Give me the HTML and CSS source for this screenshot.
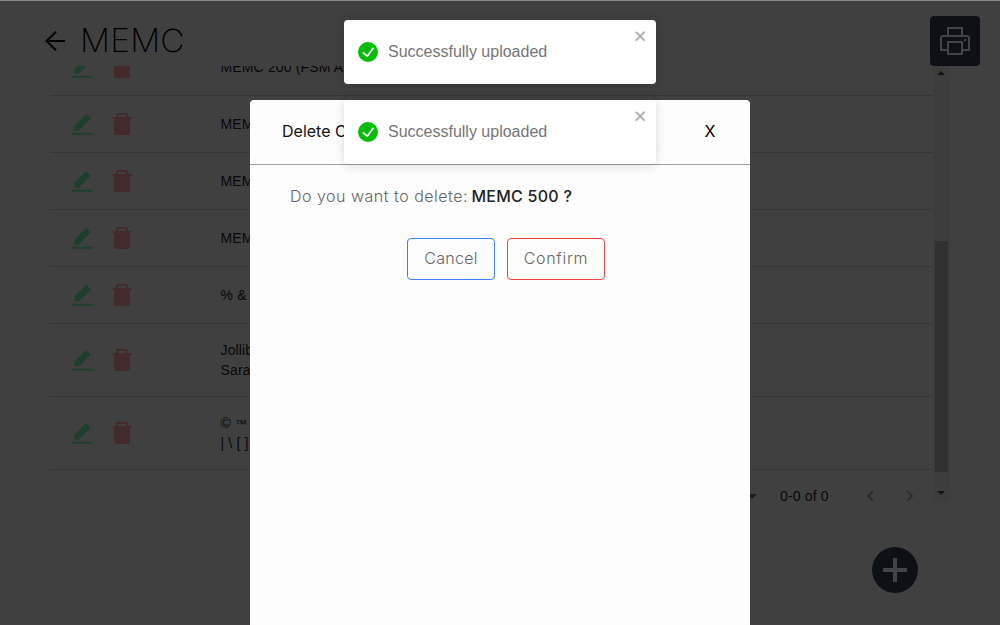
FILE: index.html
```html
<!DOCTYPE html>
<html lang="en">
<head>
<meta charset="utf-8">
<title>MEMC</title>
<link rel="stylesheet" href="styles.css">
</head>
<body>
<svg class="symbols" aria-hidden="true">
  <symbol id="edit" viewBox="0 0 22 22"><path d="M3.2 17.5V13L15 1l4.7 4.6L8 17.5z"/><path d="M1 19.8h20q1 0 1 1t-1 1H1q-1 0-1-1t1-1z"/></symbol>
  <symbol id="trash" viewBox="0 0 20 22"><path fill-rule="evenodd" d="M4 4V2Q4 0 6 0h8q2 0 2 2v2h3q1 0 1 1t-1 1h-1v14q0 2-2 2H4q-2 0-2-2V6H1Q0 6 0 5t1-1zM6 4h8V2H6z"/></symbol>
  <symbol id="check" viewBox="0 0 24 24"><path d="M12 0a12 12 0 1012 12A12.014 12.014 0 0012 0zm6.927 8.2l-6.845 9.289a1.011 1.011 0 01-1.43.188l-4.888-3.908a1 1 0 111.25-1.562l4.076 3.261 6.227-8.451a1 1 0 111.61 1.183z"/></symbol>
  <symbol id="close" viewBox="0 0 14 16"><path fill-rule="evenodd" d="M7.71 8.23l3.75 3.75-1.48 1.48-3.75-3.75-3.75 3.75L1 11.98l3.75-3.75L1 4.48 2.48 3l3.75 3.75L9.98 3l1.48 1.48-3.75 3.75z"/></symbol>
</svg>
<div class="page">
  <header class="topbar">
    <svg class="back" viewBox="0 0 20 20"><path d="M11 .7L1.5 10l9.5 9.3M1.5 10H20"/></svg>
    <h1 class="title">MEMC</h1>
    <button class="print" aria-label="Print"><svg viewBox="0 0 30 28"><path d="M8 9V1h14v8M8 23H1V11q0-2 2-2h24q2 0 2 2v12h-7M8 15h14v12H8z"/><circle cx="25" cy="13" r="1.2"/></svg></button>
  </header>
  <main class="scroller">
    <div class="table">
      <div class="row"><span class="actions"><svg class="edit"><use href="#edit"/></svg><svg class="trash"><use href="#trash"/></svg></span><span>MEMC 200 (FSM A</span></div>
      <div class="row"><span class="actions"><svg class="edit"><use href="#edit"/></svg><svg class="trash"><use href="#trash"/></svg></span><span>MEMC</span></div>
      <div class="row"><span class="actions"><svg class="edit"><use href="#edit"/></svg><svg class="trash"><use href="#trash"/></svg></span><span>MEMC</span></div>
      <div class="row"><span class="actions"><svg class="edit"><use href="#edit"/></svg><svg class="trash"><use href="#trash"/></svg></span><span>MEMC</span></div>
      <div class="row"><span class="actions"><svg class="edit"><use href="#edit"/></svg><svg class="trash"><use href="#trash"/></svg></span><span>% &amp;</span></div>
      <div class="row tall"><span class="actions"><svg class="edit"><use href="#edit"/></svg><svg class="trash"><use href="#trash"/></svg></span><span>Jollib<br>Sara</span></div>
      <div class="row tall"><span class="actions"><svg class="edit"><use href="#edit"/></svg><svg class="trash"><use href="#trash"/></svg></span><span>© <span class="mark">™</span><br>| \ [ ]</span></div>
      <div class="pager"><i class="caret"></i><span class="range">0-0 of 0</span><svg class="chev" viewBox="0 0 8 12"><path d="M7 1L2 6l5 5"/></svg><svg class="chev" viewBox="0 0 8 12"><path d="M1 1l5 5-5 5"/></svg></div>
    </div>
    <div class="scrollbar"><i class="up"></i><i class="thumb"></i><i class="down"></i></div>
  </main>
  <button class="add" aria-label="Add"><svg viewBox="0 0 24 24"><path d="M12 0v24M0 12h24"/></svg></button>
</div>
<section class="dialog">
  <header class="dialog-head"><h2>Delete C</h2><button class="dismiss">X</button></header>
  <div class="dialog-body">
    <p class="question"><span class="ask">Do you want to delete:</span><b>MEMC 500 ?</b></p>
    <div class="buttons"><button class="btn cancel">Cancel</button><button class="btn confirm">Confirm</button></div>
  </div>
</section>
<div class="toasts">
  <div class="toast"><svg class="ok"><use href="#check"/></svg><span>Successfully uploaded</span><svg class="x"><use href="#close"/></svg></div>
  <div class="toast"><svg class="ok"><use href="#check"/></svg><span>Successfully uploaded</span><svg class="x"><use href="#close"/></svg></div>
</div>
</body>
</html>
```
FILE: styles.css
```css
* { box-sizing: border-box; }
body { margin: 0; height: 625px; overflow: hidden; background: #404040; font-family: "Liberation Sans", Arial, sans-serif; }
button { padding: 0; border: 0; background: none; font: inherit; }
svg { display: block; flex: none; }
.symbols { position: absolute; width: 0; height: 0; }
.page { height: 625px; border-top: 1px solid #858a88; border-bottom: 2px solid #443f40; }
.topbar { height: 65px; padding: 15px 20px 0 45px; display: flex; align-items: flex-start; }
.back { width: 20px; height: 20px; margin-top: 15px; fill: none; stroke: #000; stroke-width: 2; }
.title { margin: 4px 0 0 15px; font: 200 32px/42px Inter, sans-serif; color: #000; letter-spacing: 0.2px; white-space: nowrap; transform: scaleX(1.045); transform-origin: left; }
.print { width: 50px; height: 50px; margin-left: auto; border-radius: 4px; background: #0d1117; display: grid; place-items: center; }
.print svg { width: 30px; height: 28px; fill: none; stroke: #404347; stroke-width: 2; }
.print circle { fill: #404347; stroke: none; }
.scroller { height: 435px; margin-left: 50px; width: 900px; display: flex; overflow: hidden; }
.table { width: 882px; margin-top: -27px; flex: none; }
.row { height: 57px; border-bottom: 1px solid #353535; display: flex; align-items: center; font-size: 14px; line-height: 20px; letter-spacing: 0.15px; color: #080808; white-space: nowrap; }
.tall { height: 73px; }
.mark { font-size: 12px; line-height: 1; }
.actions { width: 170.5px; padding-left: 21px; display: flex; gap: 19px; align-items: center; }
.edit { width: 22px; height: 22px; fill: #1f3f2d; }
.trash { width: 20px; height: 22px; fill: #442b2b; }
.pager { height: 52px; display: flex; align-items: center; padding-left: 697px; }
.caret, .up, .down { display: block; width: 0; height: 0; border: 4px solid transparent; }
.caret { border-width: 5px; border-top-color: #1c1c1c; border-bottom: 0; }
.range { width: 86px; flex: none; margin-left: 23px; font-size: 14px; letter-spacing: 0.15px; color: #080808; white-space: nowrap; }
.chev { width: 8px; height: 12px; margin-right: 32px; fill: none; stroke: #2e2e2e; stroke-width: 2; }
.scrollbar { width: 17px; margin-left: 1px; padding-right: 1px; background: #3d3d3d; display: flex; flex-direction: column; align-items: center; }
.up { border-top: 0; border-bottom-color: #141414; margin-top: 5px; }
.thumb { width: 13px; height: 231px; margin-top: 166px; background: #303030; }
.down { border-bottom: 0; border-top-color: #141414; margin-top: 19px; }
.add { width: 46px; height: 46px; margin: 46px 0 0 872px; border-radius: 50%; background: #0d1117; display: grid; place-items: center; }
.add svg { width: 24px; height: 24px; fill: none; stroke: #404347; stroke-width: 4; }
.dialog { position: absolute; left: 250px; top: 100px; width: 500px; height: 525px; background: #fdfdfd; border-radius: 4px 4px 0 0; font-family: Inter, sans-serif; }
.dialog-head { height: 65px; padding: 0 33px 2px 32px; border-bottom: 1px solid #a0a0a0; display: flex; align-items: center; justify-content: space-between; }
.dialog-head h2 { margin: 0; font-size: 16px; font-weight: 400; color: #111; }
.dismiss { width: 14px; font-size: 16px; color: #000; }
.dialog-body { padding: 19px 40px; }
.question { margin: 0; display: flex; font-size: 16px; line-height: 24px; white-space: nowrap; }
.ask { width: 181.5px; color: #666; font-weight: 300; letter-spacing: 0.5px; }
.question b { font-weight: 450; color: #222; letter-spacing: 0.25px; }
.buttons { display: flex; gap: 12px; margin: 30px 0 0 117px; }
.btn { height: 42px; padding-bottom: 2px; border: 1px solid #3b82f6; border-radius: 4px; font-size: 16px; font-weight: 300; color: #666; }
.cancel { width: 88px; letter-spacing: 0.3px; }
.confirm { width: 98px; border-color: #ef4444; letter-spacing: 0.7px; }
.toasts { position: absolute; left: 344px; top: 20px; width: 312px; display: flex; flex-direction: column; gap: 16px; }
.toast { height: 64px; padding: 8px 8px 8px 14px; border-radius: 4px; background: #fff; box-shadow: 0 1px 10px rgba(0,0,0,.1), 0 2px 15px rgba(0,0,0,.05); display: flex; align-items: center; font-size: 16px; color: #757575; }
.ok { width: 20px; height: 20px; margin-right: 10px; fill: #07bc0c; }
.x { width: 14px; height: 16px; margin-left: auto; align-self: flex-start; fill: #b3b3b3; }
```
